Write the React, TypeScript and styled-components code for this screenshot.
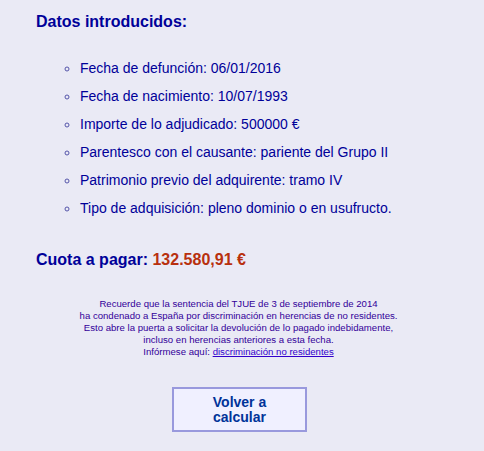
import React from "react";
import styled, { createGlobalStyle } from "styled-components";

const Global = createGlobalStyle`
  html, body { margin: 0; padding: 0; background: #eaeaf5; }
  body { font-family: "Liberation Sans", Arial, sans-serif; }
`;

const Page = styled.div`
  width: 484px;
  height: 451px;
  background: #eaeaf5;
  box-sizing: border-box;
  padding: 13px 0 0 36px;
  color: #000099;
`;

const Heading = styled.h2`
  margin: 0;
  font-size: 16px;
  line-height: 18px;
  font-weight: bold;
  color: #000099;
`;

const List = styled.ul`
  margin: 29px 0 0 0;
  padding: 0 0 0 44px;
  list-style: circle;
`;

const Item = styled.li`
  font-size: 14px;
  line-height: 16px;
  margin-bottom: 12px;
  color: #000099;
  &::marker { color: #5555aa; }
`;

const Cuota = styled.div`
  margin-top: 35px;
  font-size: 16px;
  line-height: 18px;
  font-weight: bold;
  color: #000099;
`;

const Amount = styled.span`
  color: #b8300e;
`;

const Note = styled.p`
  margin: 29px 0 0 -36px;
  width: 484px;
  box-sizing: border-box;
  padding-right: 7px;
  text-align: center;
  font-size: 9.6px;
  line-height: 12px;
  color: #330099;
`;

const Link = styled.a`
  color: #3300cc;
  text-decoration: underline;
`;

const ButtonRow = styled.div`
  margin: 29px 0 0 -36px;
  width: 484px;
  display: flex;
  justify-content: center;
  padding-right: 5px;
  box-sizing: border-box;
`;

const Button = styled.button`
  width: 135px;
  height: 45px;
  box-sizing: border-box;
  border: 2px solid #9999dd;
  background: #f0f0ff;
  color: #003399;
  font-family: "Liberation Sans", Arial, sans-serif;
  font-weight: bold;
  font-size: 14px;
  line-height: 15px;
  padding: 0 30px;
  cursor: pointer;
`;

export default function App() {
  const items = [
    "Fecha de defunción: 06/01/2016",
    "Fecha de nacimiento: 10/07/1993",
    "Importe de lo adjudicado: 500000 €",
    "Parentesco con el causante: pariente del Grupo II",
    "Patrimonio previo del adquirente: tramo IV",
    "Tipo de adquisición: pleno dominio o en usufructo.",
  ];
  return (
    <>
      <Global />
      <Page>
        <Heading>Datos introducidos:</Heading>
        <List>
          {items.map((t) => (
            <Item key={t}>{t}</Item>
          ))}
        </List>
        <Cuota>
          Cuota a pagar: <Amount>132.580,91 €</Amount>
        </Cuota>
        <Note>
          Recuerde que la sentencia del TJUE de 3 de septiembre de 2014
          <br />
          ha condenado a España por discriminación en herencias de no residentes.
          <br />
          Esto abre la puerta a solicitar la devolución de lo pagado indebidamente,
          <br />
          incluso en herencias anteriores a esta fecha.
          <br />
          Infórmese aquí: <Link href="#">discriminación no residentes</Link>
        </Note>
        <ButtonRow>
          <Button>Volver a calcular</Button>
        </ButtonRow>
      </Page>
    </>
  );
}
